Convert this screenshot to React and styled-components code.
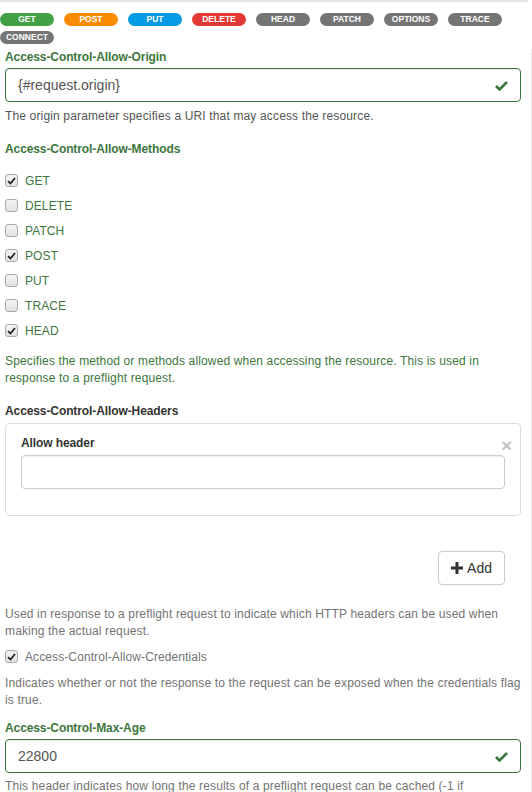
import styled, { createGlobalStyle } from 'styled-components';

const GlobalStyle = createGlobalStyle`
    html, body {
        margin: 0;
        padding: 0;
        background: #fff;
        font-family: 'Liberation Sans', Arial, sans-serif;
        font-size: 12px;
        color: #333;
        overflow: hidden;
    }
`;

const Page = styled.div`
    width: 532px;
    height: 792px;
    overflow: hidden;
`;

const TopRule = styled.div`
    height: 2px;
    margin-right: 4px;
    background: #e6e6e6;
`;

const BadgeRow = styled.div`
    display: flex;
    flex-wrap: wrap;
    gap: 5px 10px;
    width: 510px;
    padding-top: 11px;
`;

const Badge = styled.span`
    width: 54px;
    height: 13px;
    border-radius: 7px;
    background: ${(p) => p.$color};
    color: #fff;
    font-weight: bold;
    font-size: 8.5px;
    line-height: 13px;
    text-align: center;
`;

const Form = styled.div`
    margin-top: 5px;
    padding: 0 10px 0 5px;
    border-right: 1px solid #e6e6e6;
`;

const Label = styled.div`
    font-weight: bold;
    line-height: 17px;
    letter-spacing: -0.1px;
    color: ${(p) => (p.$plain ? '#333' : '#3c763d')};
    margin: ${(p) => p.$margin || '0 0 2px'};
`;

const InputBox = styled.div`
    display: flex;
    align-items: center;
    justify-content: space-between;
    height: 34px;
    box-sizing: border-box;
    padding: 0 12px 0 12px;
    border: 1px solid ${(p) => (p.$success ? '#3c763d' : '#ccc')};
    border-radius: 4px;
    box-shadow: inset 0 1px 1px rgba(0, 0, 0, 0.075);
    font-size: 14px;
    color: #555;
`;

const Help = styled.p`
    margin: ${(p) => p.$margin || '0'};
    line-height: 17px;
    letter-spacing: 0.15px;
    color: ${(p) => p.$color || '#737373'};
`;

const CheckList = styled.div`
    display: flex;
    flex-direction: column;
    margin-top: ${(p) => p.$top || 0}px;
`;

const CheckRow = styled.label`
    display: flex;
    align-items: center;
    gap: 7px;
    height: 25px;
    letter-spacing: 0.1px;
    color: ${(p) => p.$color || '#3c763d'};
`;

const Box = styled.span`
    display: inline-flex;
    align-items: center;
    justify-content: center;
    width: 13px;
    height: 13px;
    box-sizing: border-box;
    border: 1px solid #a9a9a9;
    border-radius: 3px;
    background: linear-gradient(#f4f4f4, #e2e2e2);
`;

const Panel = styled.div`
    border: 1px solid #ddd;
    border-radius: 4px;
    padding: 11px 15px 26px;
`;

const PanelHead = styled.div`
    display: flex;
    justify-content: space-between;
    align-items: flex-start;
`;

const Close = styled.span`
    font-size: 19px;
    font-weight: bold;
    line-height: 14px;
    margin-top: 4px;
    margin-right: -7px;
    color: #c4c4c4;
`;

const Actions = styled.div`
    display: flex;
    justify-content: flex-end;
    padding-right: 16px;
    margin-top: 35px;
`;

const Button = styled.button`
    display: inline-flex;
    align-items: center;
    gap: 4px;
    height: 34px;
    padding: 0 12px;
    border: 1px solid #ccc;
    border-radius: 4px;
    background: #fff;
    color: #333;
    font-family: 'Liberation Sans', Arial, sans-serif;
    font-size: 14px;
`;

const OkIcon = () => (
    <svg width="13" height="11" viewBox="0 0 13 11">
        <path d="M1 6 L4.5 9.5 L12 2" fill="none" stroke="#3c763d" strokeWidth="2.6" />
    </svg>
);

const Tick = () => (
    <svg width="9" height="8" viewBox="0 0 9 8">
        <path d="M1 4.2 L3.5 6.5 L8 1" fill="none" stroke="#222" strokeWidth="1.8" />
    </svg>
);

const PlusIcon = () => (
    <svg width="12" height="12" viewBox="0 0 12 12">
        <path d="M4.5 0 H7.5 V4.5 H12 V7.5 H7.5 V12 H4.5 V7.5 H0 V4.5 H4.5 Z" fill="#333" />
    </svg>
);

const badges = [
    ['GET', '#43a047'],
    ['POST', '#fb8c00'],
    ['PUT', '#039be5'],
    ['DELETE', '#e53935'],
    ['HEAD', '#757575'],
    ['PATCH', '#757575'],
    ['OPTIONS', '#757575'],
    ['TRACE', '#757575'],
    ['CONNECT', '#757575'],
];

const methods = [
    ['GET', true],
    ['DELETE', false],
    ['PATCH', false],
    ['POST', true],
    ['PUT', false],
    ['TRACE', false],
    ['HEAD', true],
];

const Check = ({ checked, children, color }) => (
    <CheckRow $color={color}>
        <Box>{checked && <Tick />}</Box>
        {children}
    </CheckRow>
);

export default function App() {
    return (
        <Page>
            <GlobalStyle />
            <TopRule />
            <BadgeRow>
                {badges.map(([name, color]) => (
                    <Badge key={name} $color={color}>{name}</Badge>
                ))}
            </BadgeRow>
            <Form>
                <Label>Access-Control-Allow-Origin</Label>
                <InputBox $success>
                    <span>{'{#request.origin}'}</span>
                    <OkIcon />
                </InputBox>
                <Help $margin="6px 0 0" $color="#555">The origin parameter specifies a URI that may access the resource.</Help>

                <Label $margin="16px 0 10px">Access-Control-Allow-Methods</Label>
                <CheckList>
                    {methods.map(([name, checked]) => (
                        <Check key={name} checked={checked}>{name}</Check>
                    ))}
                </CheckList>
                <Help $margin="10px 0 0" $color="#3c763d">
                    Specifies the method or methods allowed when accessing the resource. This is used in response to a preflight request.
                </Help>

                <Label $plain $margin="16px 0 3px">Access-Control-Allow-Headers</Label>
                <Panel>
                    <PanelHead>
                        <Label $plain $margin="0 0 3px">Allow header</Label>
                        <Close>×</Close>
                    </PanelHead>
                    <InputBox />
                </Panel>
                <Actions>
                    <Button><PlusIcon />Add</Button>
                </Actions>
                <Help $margin="21px 0 0">
                    Used in response to a preflight request to indicate which HTTP headers can be used when making the actual request.
                </Help>
                <CheckList $top={4}>
                    <Check checked color="#737373">Access-Control-Allow-Credentials</Check>
                </CheckList>
                <Help $margin="6px 0 0">
                    Indicates whether or not the response to the request can be exposed when the credentials flag is true.
                </Help>

                <Label $margin="11px 0 2px">Access-Control-Max-Age</Label>
                <InputBox $success>
                    <span>22800</span>
                    <OkIcon />
                </InputBox>
                <Help $margin="5px 0 0">
                    This header indicates how long the results of a preflight request can be cached (-1 if<br />
                    caching is disabled).
                </Help>
            </Form>
        </Page>
    );
}
